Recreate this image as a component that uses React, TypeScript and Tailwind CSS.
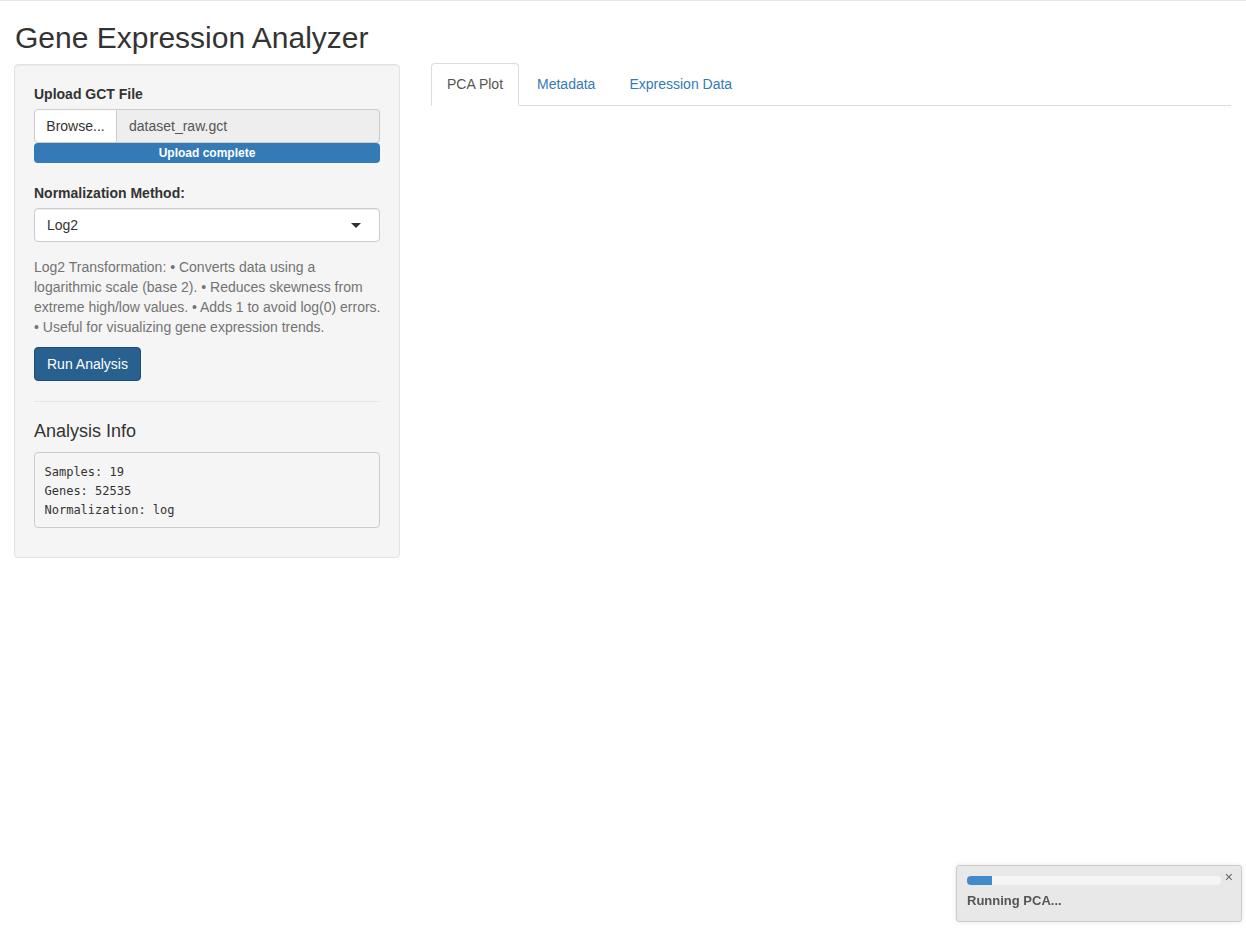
import React from "react";

const font = "font-['Liberation_Sans','Helvetica_Neue',Arial,sans-serif]";

export default function App() {
  return (
    <div className={`min-h-[930px] border-t border-[#e5e5e5] bg-white text-[14px] leading-[20px] text-[#333] ${font}`}>
      <div className="px-[14px]">
        {/* 제목 */}
        <h2 className="mt-[20px] mb-[10px] pl-px text-[30px] leading-[33px] font-normal">Gene Expression Analyzer</h2>

        <div className="flex">
          {/* 사이드바 */}
          <div className="w-[386px] shrink-0">
            <div className="rounded-[4px] border border-[#e3e3e3] bg-[#f5f5f5] px-[19px] pt-[19px] pb-[19px] shadow-[inset_0_1px_1px_rgba(0,0,0,0.05)]">
              <label className="mb-[5px] block font-bold">Upload GCT File</label>
              <div className="flex h-[34px]">
                <div className="flex w-[83px] items-center justify-center rounded-l-[4px] border border-[#ccc] bg-white text-[#333]">
                  Browse...
                </div>
                <div className="flex flex-1 items-center rounded-r-[4px] border border-l-0 border-[#ccc] bg-[#eee] px-[12px] text-[#555]">
                  dataset_raw.gct
                </div>
              </div>
              <div className="h-[20px] rounded-[4px] bg-[#337ab7] text-center text-[12px] leading-[20px] font-bold text-white">
                Upload complete
              </div>

              <label className="mt-[20px] mb-[5px] block font-bold">Normalization Method:</label>
              <div className="flex h-[34px] items-center justify-between rounded-[4px] border border-[#ccc] bg-white pl-[12px] pr-[18px] text-[#333] shadow-[inset_0_1px_1px_rgba(0,0,0,0.075)]">
                <span>Log2</span>
                <span className="h-0 w-0 border-x-[5px] border-t-[5px] border-x-transparent border-t-[#333]" />
              </div>

              <p className="mt-[15px] -mr-[5px] text-[#737373]">
                Log2 Transformation: • Converts data using a logarithmic scale (base 2). • Reduces skewness from extreme high/low values. • Adds 1 to avoid log(0) errors. • Useful for visualizing gene expression trends.
              </p>

              <button className="mt-[10px] h-[34px] rounded-[4px] border border-[#204d74] bg-[#286090] px-[12px] text-white">
                Run Analysis
              </button>

              <hr className="mt-[20px] mb-[19px] border-t border-[#e8e8e8]" />

              <h4 className="mb-[11px] text-[18px] leading-[20px] font-normal">Analysis Info</h4>
              <pre className="mb-[10px] rounded-[4px] border border-[#ccc] bg-[#f5f5f5] px-[9.5px] pt-[10px] pb-[7px] font-['DejaVu_Sans_Mono','Liberation_Mono',monospace] text-[12px] leading-[19px] text-[#333]">
{`Samples: 19
Genes: 52535
Normalization: log`}
              </pre>
            </div>
          </div>

          {/* 메인 */}
          <div className="ml-[31px] flex-1 pr-[1px]">
            <div className="-mt-px flex border-b border-[#ddd]">
              <div className="-mb-px mr-[2px] rounded-t-[4px] border border-[#ddd] border-b-white bg-white px-[15px] py-[10px] text-[#555]">
                PCA Plot
              </div>
              <div className="mr-[2px] border border-transparent px-[15px] py-[10px] text-[#337ab7]">Metadata</div>
              <div className="mr-[2px] border border-transparent px-[15px] py-[10px] text-[#337ab7]">Expression Data</div>
            </div>
          </div>
        </div>
      </div>

      {/* 진행 알림 */}
      <div className="fixed right-[4px] bottom-[8px] w-[286px] rounded-[3px] border border-[#ccc] bg-[#e8e8e8] pt-[10px] pb-[10px] pr-[20px] pl-[10px] shadow-[0_0_5px_rgba(0,0,0,0.1)]">
        <button className="absolute top-[1px] right-[8px] text-[14px] leading-[20px] text-[#666]">×</button>
        <div className="h-[9px] overflow-hidden rounded-[4px] bg-[#f5f5f5]">
          <div className="h-full w-[10%] bg-[#428bca]" />
        </div>
        <div className="mt-[6px] text-[13px] leading-[20px] font-bold text-[#555]">Running PCA...</div>
      </div>
    </div>
  );
}
